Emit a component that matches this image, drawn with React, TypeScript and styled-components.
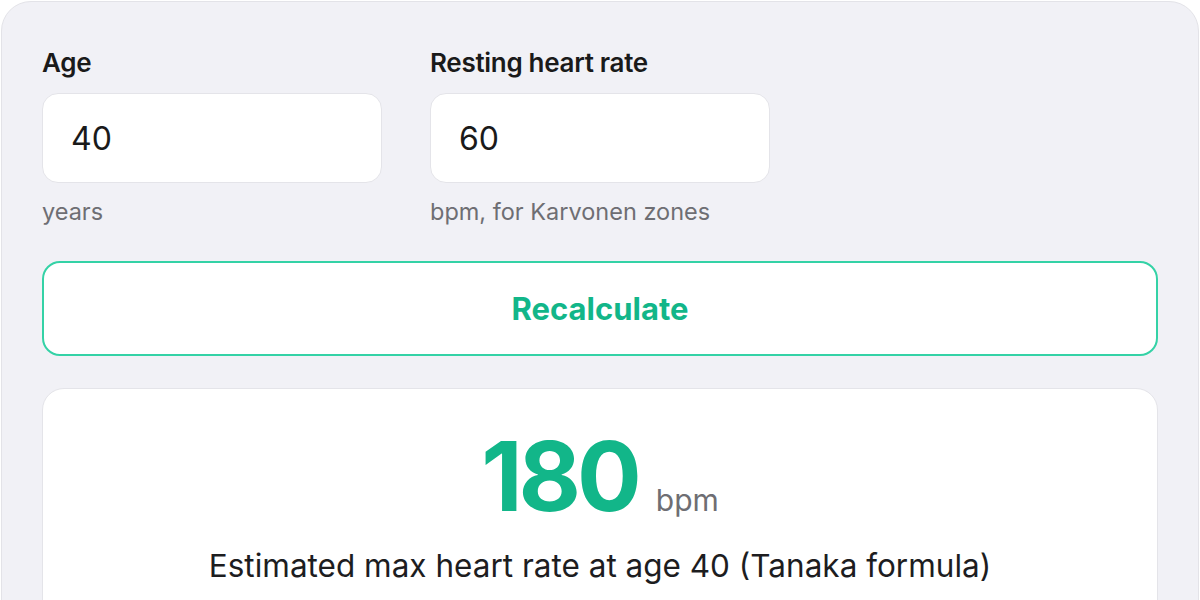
import React, { useState } from "react";
import styled, { createGlobalStyle } from "styled-components";

const GlobalStyle = createGlobalStyle`
    html, body {
        margin: 0;
        padding: 0;
        background: #ffffff;
        font-family: Inter, "Noto Sans", sans-serif;
        -webkit-font-smoothing: antialiased;
    }
`;

const Card = styled.main`
    margin: 1px;
    min-height: 700px;
    box-sizing: border-box;
    background-color: #f1f1f6;
    border: 1px solid #e3e3e8;
    border-radius: 30px;
    padding: 44px 40px 0 40px;
    display: flex;
    flex-direction: column;
`;

const Fields = styled.div`
    display: grid;
    grid-template-columns: 340px 340px;
    column-gap: 48px;
`;

const Field = styled.label`
    display: flex;
    flex-direction: column;
`;

const Label = styled.span`
    font-size: 26px;
    line-height: 34px;
    font-weight: 600;
    color: #1a1a1a;
    letter-spacing: -0.3px;
`;

const Input = styled.input`
    margin-top: 13px;
    height: 90px;
    box-sizing: border-box;
    border: 1px solid #e4e4e9;
    border-radius: 16px;
    background: #ffffff;
    padding: 0 28px;
    font-family: inherit;
    font-size: 32px;
    color: #1a1a1a;
    outline: none;
`;

const Hint = styled.span`
    margin-top: 14px;
    font-size: 23.5px;
    line-height: 30px;
    color: #6e6e73;
`;

const Button = styled.button`
    margin-top: 34px;
    height: 95px;
    border: 2px solid #34d2a6;
    border-radius: 18px;
    background: #ffffff;
    color: #12b689;
    font-family: inherit;
    font-size: 31px;
    font-weight: 700;
    cursor: pointer;
`;

const Result = styled.section`
    margin-top: 32px;
    background: #ffffff;
    border: 1px solid #e4e4e9;
    border-radius: 22px;
    display: flex;
    flex-direction: column;
    align-items: center;
    padding-top: 29px;
    height: 300px;
`;

const Value = styled.div`
    display: flex;
    align-items: baseline;
    gap: 18px;
    & > strong {
        font-size: 96px;
        line-height: 116px;
        font-weight: 700;
        color: #12b689;
        letter-spacing: -4px;
    }
    & > span {
        font-size: 30px;
        color: #6e6e73;
    }
`;

const Caption = styled.p`
    margin: 12px 0 0 0;
    font-size: 31.5px;
    color: #1d1d1f;
`;

const App = () => {
    const [age, setAge] = useState("40");
    const [rest, setRest] = useState("60");

    return (
        <>
            <GlobalStyle />
            <Card>
                <Fields>
                    <Field>
                        <Label>Age</Label>
                        <Input value={age} onChange={(e) => setAge(e.target.value)} />
                        <Hint>years</Hint>
                    </Field>
                    <Field>
                        <Label>Resting heart rate</Label>
                        <Input value={rest} onChange={(e) => setRest(e.target.value)} />
                        <Hint>bpm, for Karvonen zones</Hint>
                    </Field>
                </Fields>
                <Button>Recalculate</Button>
                <Result>
                    <Value>
                        <strong>180</strong>
                        <span>bpm</span>
                    </Value>
                    <Caption>Estimated max heart rate at age 40 (Tanaka formula)</Caption>
                </Result>
            </Card>
        </>
    );
};

export default App;
